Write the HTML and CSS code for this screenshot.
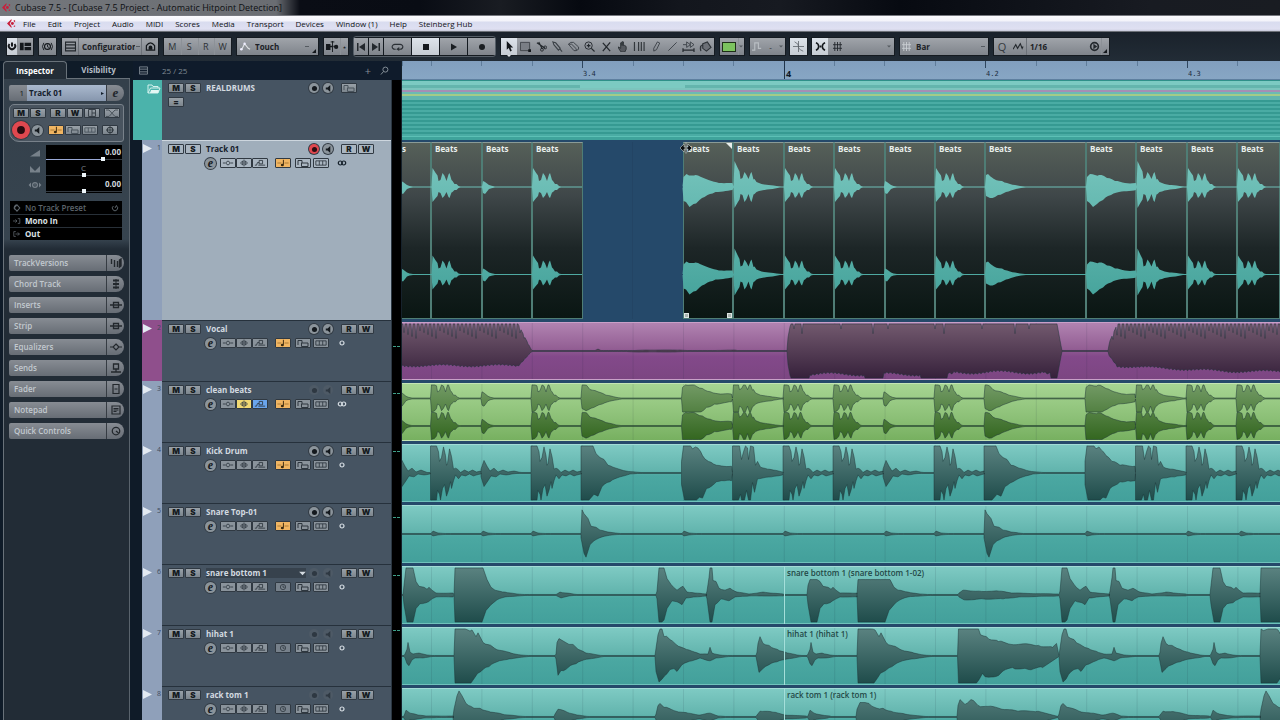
FILE: index.html
```html
<!DOCTYPE html>
<html lang="en">
<head>
<meta charset="utf-8">
<title>Cubase 7.5 - [Cubase 7.5 Project - Automatic Hitpoint Detection]</title>
<link rel="stylesheet" href="styles.css">
</head>
<body>
<svg class="sprite" aria-hidden="true">
  <symbol id="logo" viewBox="0 0 10 10"><path d="M5 0 0 5l5 5V8L3 5l2-3z" fill="#c8203c"/><circle cx="6" cy="5" r="1.6" fill="#c8203c"/><path d="M7 2l2-1v3zM7 8l2 1V7z" fill="#c8203c"/></symbol>
  <symbol id="power" viewBox="0 0 10 10"><path d="M5 1v4M2.5 2.5a3.2 3.2 0 1 0 5 0" fill="none" stroke="#16191d" stroke-width="2"/></symbol>
  <symbol id="layout" viewBox="0 0 14 10"><path d="M1 1h4v8H1zM6 1h7v3.500H6zM6 5.500h7V9H6z" fill="#14181c"/></symbol>
  <symbol id="clock" viewBox="0 0 14 12"><circle cx="7" cy="6" r="3.200" fill="none" stroke="#14181c" stroke-width="1.300"/><path d="M7 4v2.300l1.500.7M3 2Q0 6 3 10M11 2q3 4 0 8" fill="none" stroke="#14181c"/></symbol>
  <symbol id="list" viewBox="0 0 10 10"><path d="M.5 1h9v8h-9zM1 3.500h8M1 6.500h8" fill="none" stroke="currentColor"/></symbol>
  <symbol id="house" viewBox="0 0 12 10"><path d="M1.500 9V4Q6-2 10.500 4v5zM1 9h10" fill="none" stroke="#14181c" stroke-width="1.300"/><path d="M4 8.500V6a2 2 0 0 1 4 0v2.500z" fill="#14181c"/></symbol>
  <symbol id="auto" viewBox="0 0 12 10"><path d="M0 8h2l3-6 4 5 2 1" fill="none" stroke="#dfe3e6" stroke-width="1.200"/><circle cx="5" cy="2" r="1.300" fill="#eef"/><circle cx="1.500" cy="8" r="1.300" fill="#eef"/></symbol>
  <symbol id="scroll" viewBox="0 0 14 12"><path d="M0 4h4v5H0zM4 6h3M8 6h4" stroke="#15191d" fill="#15191d" stroke-width="1.500"/><path d="M7 0v12M5 1h4" stroke="#15191d"/><circle cx="11" cy="6.500" r="2.300" fill="#15191d"/></symbol>
  <symbol id="prev" viewBox="0 0 10 8"><path d="M1 0h1.500v8H1zM9 0v8L3 4z" fill="#23282d"/></symbol>
  <symbol id="next" viewBox="0 0 10 8"><path d="M7.500 0H9v8H7.500zM1 0v8l6-4z" fill="#23282d"/></symbol>
  <symbol id="cycle" viewBox="0 0 14 9"><path d="M5 7H4a3 2.700 0 0 1 0-5.400h6A3 2.700 0 0 1 10 7H8" fill="none" stroke="#2b3035" stroke-width="1.300"/><path d="M9 4.500V9L5.500 7z" fill="#2b3035"/></symbol>
  <symbol id="stop" viewBox="0 0 8 8"><path d="M1 1h6v6H1z" fill="#15191d"/></symbol>
  <symbol id="play" viewBox="0 0 8 8"><path d="M1 .5v7L7 4z" fill="#1a1e22"/></symbol>
  <symbol id="rec" viewBox="0 0 8 8"><circle cx="4" cy="4" r="3" fill="#1a1e22"/></symbol>
  <symbol id="arrow" viewBox="0 0 12 12"><path d="M3 0v9.500l2.200-2 1.600 4 1.700-.8L7 7.200h3z" fill="#14181c"/></symbol>
  <symbol id="range" viewBox="0 0 12 12"><path d="M.5 1.500h10v9H.5z" fill="#7a7e85" stroke="#3e4348"/><path d="M9 9h3v3H9z" fill="#14181c"/></symbol>
  <symbol id="scissors" viewBox="0 0 12 12"><path d="M1 2l9 6M3 1l4 8" stroke="#24292e" stroke-width="1.300"/><circle cx="6.500" cy="9.500" r="1.600" fill="none" stroke="#24292e"/><circle cx="10" cy="7" r="1.600" fill="none" stroke="#24292e"/></symbol>
  <symbol id="glue" viewBox="0 0 12 12"><path d="M1 1l3 1 5 6-2 2-5-6zM8.500 8.500l2.500 3" fill="none" stroke="#3b4147" stroke-width="1.200"/></symbol>
  <symbol id="eraser" viewBox="0 0 12 12"><path d="M.5 3.500L3 1.500h3l5.500 5v2.500l-2.500 1.500H6.500zM.5 3.500h3.500l5 5v2" fill="none" stroke="#3b4147"/></symbol>
  <symbol id="zoom" viewBox="0 0 12 12"><circle cx="5" cy="5" r="4" fill="none" stroke="#24292e"/><path d="M8 8l3.500 3.500M3 5h4M5 3v4" stroke="#24292e" stroke-width="1.300"/></symbol>
  <symbol id="mute" viewBox="0 0 12 12"><path d="M2 2l8 9M10 1.500L2 11" stroke="#24292e" stroke-width="1.400"/></symbol>
  <symbol id="hand" viewBox="0 0 12 12"><path d="M1.500 6.500L4 8V2q1-1 1.500 0v3-4q1-.7 1.500 0v4q.7-.8 1.500 0 1 0 1.500 1.500V9l-1.500 3h-4L2 8.500z" fill="#55595f" stroke="#2c3136"/></symbol>
  <symbol id="warp" viewBox="0 0 14 12"><path d="M1.500 1v10M6 1v10M9 1v10M12 1v10" stroke="#33383d" stroke-width="1.300"/></symbol>
  <symbol id="pencil" viewBox="0 0 12 12"><path d="M3 8l4-7 2.500 1.200L6 9.500 3 11z" fill="none" stroke="#3b4147"/></symbol>
  <symbol id="line" viewBox="0 0 12 12"><path d="M1.500 10.500l9-9" stroke="#3b4147"/></symbol>
  <symbol id="scrub" viewBox="0 0 14 12"><path d="M1 4h4V1l4 3-4 3V4M9 4V1l4 3-4 3z" fill="none" stroke="#3b4147"/><path d="M1 10h12M1 8v4M13 8v4" stroke="#24292e" stroke-width="1.300"/></symbol>
  <symbol id="bucket" viewBox="0 0 14 12"><path d="M4 3l5-2 4 6-5 4-4-3zM4 4Q0 5 2 11" fill="#6c7077" stroke="#2c3136" stroke-width="1.200"/></symbol>
  <symbol id="curve" viewBox="0 0 12 12"><path d="M0 10h3V2h4v6h3" fill="none" stroke="#b8bdc2" stroke-width="1.300"/></symbol>
  <symbol id="cross" viewBox="0 0 14 14"><path d="M7 0v14M0 7h14M2 1q6 3 5 6t6 6" fill="none" stroke="#5b6167"/></symbol>
  <symbol id="snap" viewBox="0 0 12 10"><path d="M1 1q3 1 3 4T1 9M11 1Q8 2 8 5t3 4M6 4v2" fill="none" stroke="#14181c" stroke-width="1.700"/></symbol>
  <symbol id="hash" viewBox="0 0 10 10"><path d="M2 0v10M5 0v10M8 0v10M0 3h10M0 7h10" stroke="currentColor"/></symbol>
  <symbol id="wave" viewBox="0 0 12 8"><path d="M0 7l3-5 2 4 3-5 2 5 1-2" fill="none" stroke="#24292e" stroke-width="1.200"/></symbol>
  <symbol id="iterq" viewBox="0 0 10 10"><circle cx="5" cy="5" r="3.500" fill="none" stroke="#24292e" stroke-width="1.500"/><path d="M4 2.500v5L7.500 5z" fill="#24292e"/></symbol>
  <symbol id="search" viewBox="0 0 10 10"><circle cx="6" cy="4" r="2.800" fill="none" stroke="#848e97" stroke-width="1.100"/><path d="M4 6L1 9.500" stroke="#848e97" stroke-width="1.100"/></symbol>
  <symbol id="folder" viewBox="0 0 14 10"><path d="M1 9V1h4l1 1.500h5V4M1 9l2.500-5H13l-2 5z" fill="none" stroke="#d5f2ee"/><path d="M3 9l1-3h8l-1 3z" fill="#e4f7f4"/></symbol>
  <symbol id="tri" viewBox="0 0 8 8"><path d="M0 0v8l8-4z" fill="currentColor"/></symbol>
  <symbol id="down" viewBox="0 0 8 6"><path d="M0 1h8L4 5z" fill="currentColor"/></symbol>
  <symbol id="speaker" viewBox="0 0 10 10"><path d="M2 4h2l3-3v8L4 6H2z" fill="currentColor"/></symbol>
  <symbol id="dot" viewBox="0 0 10 10"><circle cx="5" cy="5" r="2.800" fill="currentColor"/></symbol>
  <symbol id="ins" viewBox="0 0 14 8"><path d="M1 4h3M10 4h3M4.500 4L6 2h2l1.500 2L8 6H6z" fill="none" stroke="currentColor"/></symbol>
  <symbol id="eq" viewBox="0 0 14 8"><path d="M7 0v8M3 4l2.500-2.500v5zM11 4L8.500 1.500v5z" fill="none" stroke="currentColor"/></symbol>
  <symbol id="send" viewBox="0 0 14 8"><path d="M1 6.500h2l1-3h2M5 6.500h8M6 1h4v4H6z" fill="none" stroke="currentColor"/></symbol>
  <symbol id="note" viewBox="0 0 14 10"><path d="M0 5h5M9 5h5" stroke="#9b6c2c"/><path d="M7.500 1v6" stroke="#3a2a10" stroke-width="1.200"/><ellipse cx="6.200" cy="7.500" rx="1.900" ry="1.500" fill="#3a2a10"/></symbol>
  <symbol id="lock" viewBox="0 0 12 8"><path d="M1 6V1.500h4V4M4.500 4h6.500v3.500H4.500z" fill="none" stroke="currentColor"/></symbol>
  <symbol id="lanes" viewBox="0 0 14 8"><path d="M1 1.500h12v5H1zM5 1.500v5M9 1.500v5" fill="none" stroke="currentColor"/></symbol>
  <symbol id="timer" viewBox="0 0 14 10"><circle cx="7" cy="5" r="3.300" fill="none" stroke="currentColor"/><path d="M7 3v2.300h2" fill="none" stroke="currentColor"/></symbol>
  <symbol id="mono" viewBox="0 0 10 8"><circle cx="5" cy="4" r="2" fill="none" stroke="currentColor" stroke-width="1.200"/></symbol>
  <symbol id="stereo" viewBox="0 0 10 8"><circle cx="3.300" cy="4" r="2" fill="none" stroke="currentColor" stroke-width="1.200"/><circle cx="6.700" cy="4" r="2" fill="none" stroke="currentColor" stroke-width="1.200"/></symbol>
  <symbol id="panes" viewBox="0 0 12 8"><path d="M2.500.5h7v7h-7zM6 .5v7M6 4h3.500" fill="none" stroke="#3a424a"/></symbol>
  <symbol id="xfade" viewBox="0 0 12 8"><path d="M0 7.500h3L9 1h3M0 1h3l6 6.500h3" fill="none" stroke="#4a535b"/></symbol>
  <symbol id="freeze" viewBox="0 0 12 10"><circle cx="6" cy="5" r="3.500" fill="none" stroke="#2f373e" stroke-width="1.300"/><path d="M6 0v10M1 5h10" stroke="#2f373e"/></symbol>
  <symbol id="vol" viewBox="0 0 12 8"><path d="M1 7.500L11 1v6.500z" fill="#77818a"/></symbol>
  <symbol id="pan" viewBox="0 0 12 8"><path d="M1 1v6.500h10V1L6 6z" fill="#77818a"/></symbol>
  <symbol id="delay" viewBox="0 0 16 10"><path d="M3 2L0 5l3 3zM13 2l3 3-3 3z" fill="#77818a"/><circle cx="8" cy="5" r="3" fill="none" stroke="#77818a" stroke-width="1.500"/><path d="M8 3v3" stroke="#77818a"/></symbol>
  <symbol id="in" viewBox="0 0 10 8"><path d="M0 4h5M3 2l2 2-2 2M6 1h2.500v6H6" fill="none" stroke="#5d656c"/></symbol>
  <symbol id="out" viewBox="0 0 10 8"><path d="M3.500 1H1v6h2.500M3 4h5M6 2l2 2-2 2" fill="none" stroke="#5d656c"/></symbol>
  <symbol id="preset" viewBox="0 0 10 10"><path d="M5 1l3.500 4L5 9 1.500 5zM5 1a4 4 0 0 0-3 6" fill="none" stroke="#5d656c" stroke-width="1.300"/></symbol>
  <symbol id="reload" viewBox="0 0 10 10"><path d="M3 2.500a3.300 3.300 0 1 0 4 0M5 5l2-3.500" fill="none" stroke="#5d656c" stroke-width="1.200"/></symbol>
  <symbol id="versions" viewBox="0 0 12 10"><path d="M1.500 1v5M4.500 2v7M7.500 3v6M9.500 2l1.500-1v7l-1.500 1z" fill="#23282d" stroke="#23282d" stroke-width="1.400"/></symbol>
  <symbol id="chord" viewBox="0 0 12 10"><path d="M6 0v10" stroke="#23282d"/><path d="M3 1.500h6M3 5h6M3 8.500h6" stroke="#23282d" stroke-width="2"/></symbol>
  <symbol id="insert" viewBox="0 0 12 10"><path d="M0 5h12M3.500 2.500h5v5h-5z" fill="none" stroke="#23282d" stroke-width="1.300"/></symbol>
  <symbol id="equal" viewBox="0 0 12 10"><path d="M0 5h3M9 5h3M6 2l3 3-3 3-3-3z" fill="none" stroke="#23282d" stroke-width="1.200"/></symbol>
  <symbol id="sends" viewBox="0 0 12 10"><path d="M3.500 1h5v5h-5zM6 6v3M1 9h10" fill="none" stroke="#23282d" stroke-width="1.300"/></symbol>
  <symbol id="fader" viewBox="0 0 12 10"><path d="M3 .5h6v9H3zM4.500 5h3" fill="none" stroke="#23282d" stroke-width="1.200"/></symbol>
  <symbol id="pad" viewBox="0 0 12 10"><path d="M2 1h8v8H2zM3.500 3.500h5M3.500 5h5M3.500 6.500h3" fill="none" stroke="#23282d" stroke-width="1.200"/></symbol>
  <symbol id="knob" viewBox="0 0 12 12"><circle cx="6" cy="6" r="4.500" fill="none" stroke="#23282d" stroke-width="1.500"/><path d="M6 6l3 2.500" stroke="#23282d" stroke-width="1.500"/></symbol>
</svg>

<header class="titlebar"><svg class="logo"><use href="#logo"/></svg><h1 class="title">Cubase 7.5 - [Cubase 7.5 Project - Automatic Hitpoint Detection]</h1></header>

<nav class="menubar">
  <svg class="logo"><use href="#logo"/></svg>
  <a href="#">File</a><a href="#">Edit</a><a href="#">Project</a><a href="#">Audio</a><a href="#">MIDI</a><a href="#">Scores</a><a href="#">Media</a><a href="#">Transport</a><a href="#">Devices</a><a href="#">Window (1)</a><a href="#">Help</a><a href="#">Steinberg Hub</a>
</nav>

<div class="toolbar" role="toolbar" aria-label="Project">
  <div class="group">
    <button class="tb w10 lit" aria-label="Activate project"><svg><use href="#power"/></svg></button>
    <button class="tb w16" aria-label="Window layout"><svg class="wide"><use href="#layout"/></svg></button>
  </div>
  <div class="group"><button class="tb w17" aria-label="Constrain delay"><svg class="wide"><use href="#clock"/></svg></button></div>
  <div class="group">
    <button class="tb w16" aria-label="Visibility list"><svg><use href="#list"/></svg></button>
    <select class="pick pick-config" aria-label="Visibility configuration"><option>Configurations</option></select>
    <button class="tb w16" aria-label="Agents"><svg><use href="#house"/></svg></button>
  </div>
  <div class="group letters">
    <button class="tb">M</button><button class="tb">S</button><button class="tb">R</button><button class="tb">W</button>
  </div>
  <div class="group corner">
    <span class="tb w16"><svg><use href="#auto"/></svg></span>
    <select class="pick pick-touch" aria-label="Automation mode"><option>Touch</option></select>
    <span class="tb w6"></span>
  </div>
  <div class="group"><button class="tb w16" aria-label="Auto-scroll"><svg class="wide"><use href="#scroll"/></svg></button><button class="tb w8" aria-label="Suspend scroll">⋆</button></div>
  <div class="transport">
    <button class="tb w14" aria-label="Previous marker"><svg><use href="#prev"/></svg></button>
    <button class="tb w14" aria-label="Next marker"><svg><use href="#next"/></svg></button>
    <button class="tb w27" aria-label="Cycle"><svg class="wide"><use href="#cycle"/></svg></button>
    <button class="tb w27 lit" aria-label="Stop"><svg><use href="#stop"/></svg></button>
    <button class="tb w27" aria-label="Play"><svg><use href="#play"/></svg></button>
    <button class="tb w27" aria-label="Record"><svg><use href="#rec"/></svg></button>
  </div>
  <div class="group tools">
    <button class="tb w16 lit current" aria-label="Select"><svg><use href="#arrow"/></svg></button>
    <button class="tb w16" aria-label="Range"><svg><use href="#range"/></svg></button>
    <button class="tb w16" aria-label="Split"><svg><use href="#scissors"/></svg></button>
    <button class="tb w16" aria-label="Glue"><svg><use href="#glue"/></svg></button>
    <button class="tb w16" aria-label="Erase"><svg class="wide"><use href="#eraser"/></svg></button>
    <button class="tb w17" aria-label="Zoom"><svg><use href="#zoom"/></svg></button>
    <button class="tb w16" aria-label="Mute"><svg><use href="#mute"/></svg></button>
    <button class="tb w16" aria-label="Comp"><svg><use href="#hand"/></svg></button>
    <button class="tb w18" aria-label="Time warp"><svg class="wide"><use href="#warp"/></svg></button>
    <button class="tb w16" aria-label="Draw"><svg><use href="#pencil"/></svg></button>
    <button class="tb w16" aria-label="Line"><svg><use href="#line"/></svg></button>
    <button class="tb w16" aria-label="Play tool"><svg class="wide"><use href="#scrub"/></svg></button>
    <button class="tb w18" aria-label="Color tool"><svg class="wide"><use href="#bucket"/></svg></button>
  </div>
  <div class="group"><button class="tb w18" aria-label="Event color"><span class="swatch"></span></button><span class="tb w6"><svg class="caret"><use href="#down"/></svg></span></div>
  <div class="group"><button class="tb w14" aria-label="Nudge"><svg><use href="#curve"/></svg></button><span class="tb w13 flat">-</span><span class="tb w8 flat"><svg class="caret"><use href="#down"/></svg></span></div>
  <div class="group near"><button class="tb w17 lit" aria-label="Snap to zero crossing"><svg class="wide"><use href="#cross"/></svg></button></div>
  <div class="group">
    <button class="tb w16 lit" aria-label="Snap"><svg><use href="#snap"/></svg></button>
    <button class="tb w18 flat" aria-label="Grid type"><svg class="small"><use href="#hash"/></svg></button>
    <span class="tb dim flat"></span>
    <span class="tb w10 flat"><svg class="caret"><use href="#down"/></svg></span>
  </div>
  <div class="group">
    <span class="tb w13 pale"><svg class="small"><use href="#hash"/></svg></span>
    <select class="pick pick-bar" aria-label="Grid"><option>Bar</option></select>
  </div>
  <div class="group corner">
    <button class="tb w16 big">Q</button>
    <button class="tb w16 flat" aria-label="Soft quantize"><svg><use href="#wave"/></svg></button>
    <select class="pick pick-q" aria-label="Quantize"><option>1/16</option></select>
    <button class="tb w13 flat" aria-label="Iterative quantize"><svg><use href="#iterq"/></svg></button>
    <span class="tb w8"></span>
  </div>
</div>

<main class="workspace">
  <aside class="inspector">
    <div class="tabs" role="tablist">
      <button class="tab active" role="tab" aria-selected="true">Inspector</button>
      <button class="tab" role="tab" aria-selected="false">Visibility</button>
    </div>
    <div class="inspector-body">
      <div class="pill pill-track"><span class="pill-num">1</span><button class="pill-name">Track 01<svg><use href="#tri"/></svg></button><button class="pill-end script-e">e</button></div>
      <div class="channel">
        <button class="sq">M</button><button class="sq">S</button><button class="sq gap">R</button><button class="sq">W</button><button class="sq" aria-label="Lanes"><svg><use href="#panes"/></svg></button><button class="sq gap" aria-label="Auto fades"><svg><use href="#xfade"/></svg></button>
        <div class="channel-two">
          <button class="round armed large" aria-label="Record enable"><svg><use href="#dot"/></svg></button>
          <button class="round medium" aria-label="Monitor"><svg><use href="#speaker"/></svg></button>
          <button class="sq on-orange" aria-label="Musical mode"><svg><use href="#note"/></svg></button><button class="sq faint" aria-label="Lock"><svg><use href="#lock"/></svg></button><button class="sq faint" aria-label="Show lanes"><svg><use href="#lanes"/></svg></button><button class="sq gap" aria-label="Freeze"><svg><use href="#freeze"/></svg></button>
        </div>
      </div>
      <div class="faders">
        <label class="fader-icon" for="vol-r"><svg><use href="#vol"/></svg></label><div class="fader"><output>0.00</output><input class="filled" id="vol-r" type="range" min="0" max="100" value="77"></div>
        <label class="fader-icon" for="pan-r"><svg><use href="#pan"/></svg></label><div class="fader center"><output>C</output><input id="pan-r" type="range" min="0" max="100" value="50"></div>
        <label class="fader-icon" for="del-r"><svg><use href="#delay"/></svg></label><div class="fader"><output>0.00</output><input id="del-r" type="range" min="0" max="100" value="50"></div>
      </div>
      <div class="routing">
        <button class="route muted"><svg><use href="#preset"/></svg><span>No Track Preset</span><svg><use href="#reload"/></svg></button>
        <button class="route"><svg><use href="#in"/></svg><span>Mono In</span></button>
        <button class="route"><svg><use href="#out"/></svg><span>Out</span></button>
      </div>
      <div class="sections">
        <button class="pill"><span class="pill-label">TrackVersions</span><span class="pill-end"><svg><use href="#versions"/></svg></span></button>
        <button class="pill"><span class="pill-label">Chord Track</span><span class="pill-end"><svg><use href="#chord"/></svg></span></button>
        <button class="pill"><span class="pill-label">Inserts</span><span class="pill-end"><svg><use href="#insert"/></svg></span></button>
        <button class="pill"><span class="pill-label">Strip</span><span class="pill-end"><svg><use href="#insert"/></svg></span></button>
        <button class="pill"><span class="pill-label">Equalizers</span><span class="pill-end"><svg><use href="#equal"/></svg></span></button>
        <button class="pill"><span class="pill-label">Sends</span><span class="pill-end"><svg><use href="#sends"/></svg></span></button>
        <button class="pill"><span class="pill-label">Fader</span><span class="pill-end"><svg><use href="#fader"/></svg></span></button>
        <button class="pill"><span class="pill-label">Notepad</span><span class="pill-end"><svg><use href="#pad"/></svg></span></button>
        <button class="pill"><span class="pill-label">Quick Controls</span><span class="pill-end"><svg><use href="#knob"/></svg></span></button>
      </div>
    </div>
  </aside>

  <section class="project">
    <div class="project-head">
      <div class="list-head"><svg class="list-icon"><use href="#list"/></svg><span class="count">25 / 25</span><button class="plain add" aria-label="Add track">+</button><button class="plain" aria-label="Find track"><svg><use href="#search"/></svg></button></div>
      <div class="meter"></div>
      <div class="ruler" id="ruler"></div>
    </div>
    <div id="tracks"></div>
  </section>
</main>
<script src="app.js"></script>
</body>
</html>
```
FILE: styles.css
```css
* { box-sizing: border-box; }
body {
  margin: 0;
  height: 100vh;
  overflow: hidden;
  display: flex;
  flex-direction: column;
  background: #0f1b28;
  color: #d3dae0;
  font: 8px/10px "Open Sans", "Noto Sans", sans-serif;
}
button, select, input { font: inherit; color: inherit; margin: 0; padding: 0; border: 0; background: none; border-radius: 0; }
svg { display: block; }
.sprite { position: absolute; width: 0; height: 0; }

/* window chrome */
.titlebar { flex: none; height: 16px; display: flex; align-items: center; gap: 4px; padding-left: 2px; border-bottom: 1px solid #777980; background: linear-gradient(90deg, #74777c 0, #6a6d72 276px, #0a0d15 300px, #090c14 420px, #191c22 500px, #060910 580px, #13161d 680px, #171a21 780px, #070a11 900px, #181b22 1150px, #191c22); }
.title { margin: 0; font: inherit; font-size: 9px; color: #0d0f12; }
.logo { width: 9px; height: 9px; flex: none; }
.menubar { flex: none; height: 16px; display: flex; align-items: center; gap: 12px; padding-left: 7px; background: linear-gradient(#fbfbfe 0, #f3f3fa 5px, #d9dcef 6px, #dfe0f2 13px, #c6c9d8); border-bottom: 1px solid #6d7178; }
.menubar .logo { margin-right: -5px; }
.menubar a { color: #101216; text-decoration: none; white-space: nowrap; }

/* toolbar */
.toolbar { flex: none; height: 29px; display: flex; align-items: center; gap: 6px; padding: 0 7px; background: linear-gradient(#1a222b, #222c36); }
.group { display: flex; height: 17px; background: linear-gradient(#a0a4aa, #7f848b); box-shadow: 0 0 0 1px #151b21; }
.near { margin: 0 -1px; }
.tb { display: flex; align-items: center; justify-content: center; height: 17px; color: #22272c; }
.tb svg { width: 11px; height: 11px; }
.tb .wide { width: 13px; }
.tb .small { width: 9px; height: 9px; }
.tb .caret { width: 4px; height: 3px; color: #555b61; }
.tb + .tb { box-shadow: inset 1px 0 #8c9197; }
.tools .tb, .tb.flat { box-shadow: none; }
.w6 { width: 6px; } .w8 { width: 8px; } .w10 { width: 10px; } .w13 { width: 13px; } .w14 { width: 14px; } .w16 { width: 16px; } .w17 { width: 17px; } .w18 { width: 18px; } .w27 { width: 27px; }
.dim { width: 38px; }
.lit { background: linear-gradient(#dde3ea, #c6ccd3); }
.pale { color: #c9ced2; }
.letters { width: 67px; }
.letters .tb { flex: 1; font-size: 9px; color: #2c3136; }
.big { font-size: 11px; color: #33383d; }
.pick { appearance: none; height: 17px; padding: 0 10px 0 3px; font-weight: 700; color: #1c2126; border-left: 1px solid #6c7178; background: linear-gradient(#555b61, #555b61) right 3px center / 4px 1px no-repeat; }
.pick-config { width: 64px; border-right: 1px solid #6c7178; padding-right: 6px; background-position: right 1px center; }
.pick-touch { width: 59px; border-left: 0; padding-left: 2px; }
.pick-bar { width: 75px; border-left: 0; }
.pick-q { width: 62px; background-image: none; }
.corner { position: relative; }
.corner::after { content: ""; position: absolute; right: 2px; bottom: 2px; border: 2px solid; border-color: transparent #14181c #14181c transparent; }
.transport { display: flex; gap: 1px; align-items: center; height: 21px; padding: 1px 0; margin: 0 -1px; border: 1px solid #555e67; border-radius: 3px; background: #141a20; }
.transport .tb { background: linear-gradient(#a0a4aa, #7f848b); box-shadow: none; }
.transport .tb.lit { background: linear-gradient(#dde3ea, #c6ccd3); }
.transport svg { width: 10px; height: 8px; }
.current { position: relative; }
.current::after { content: ""; position: absolute; bottom: -4px; left: 6px; border: 2px solid transparent; border-top-color: #e2e6ea; }
.swatch { width: 14px; height: 10px; background: #7cc35f; border: 1px solid #1e2f17; }

/* workspace */
.workspace { flex: 1; min-height: 0; display: flex; gap: 3px; }
.inspector { flex: none; width: 130px; padding-left: 3px; display: flex; flex-direction: column; }
.tabs { flex: none; display: flex; height: 18px; background: #0f1b28; }
.tab { width: 63px; font-weight: 700; border-bottom: 1px solid #69727a; color: #b4bcc4; }
.tab.active { width: 64px; background: #232d37; color: #fff; border: 1px solid #69727a; border-bottom: 0; border-radius: 4px 4px 0 0; }
.inspector-body { flex: 1; padding: 6px 5px; display: flex; flex-direction: column; background: linear-gradient(#34404b, #37444f 160px, #222c36 170px); border: solid #59636c; border-width: 0 1px; border-left-color: #69727a; }
.pill { flex: none; display: flex; width: 115px; height: 16px; color: #c2c9cf; text-align: left; border-radius: 2px 8px 8px 2px; background: linear-gradient(#878c93, #676d75); overflow: hidden; }
.pill-label { flex: 1; padding: 3px 5px; font-weight: 600; }
.pill-end { width: 18px; height: 16px; display: flex; align-items: center; justify-content: center; border-left: 1px solid #363c43; }
.pill-end svg { width: 12px; height: 10px; }
.pill-num { width: 18px; padding: 3px 3px 0 0; text-align: right; color: #14181c; }
.pill-name { flex: 1; display: flex; align-items: center; justify-content: space-between; padding: 0 2px; text-align: left; font-weight: 700; color: #14202c; background: linear-gradient(#aab9ce, #8696ad); }
.pill-name svg { width: 3px; height: 5px; }
.script-e { font: italic bold 13px/14px "Liberation Serif", serif; color: #22272c; }
.channel { margin-top: 3px; width: 115px; height: 38px; padding: 3px 0 0 3px; display: flex; flex-wrap: wrap; align-content: flex-start; gap: 1px; border: 1px solid #78818a; border-radius: 5px 3px 3px 10px; background: #49545f; }
.channel-two { display: flex; gap: 1px; align-items: center; width: 100%; margin-top: 2px; }
.sq { flex: none; width: 16px; height: 10px; display: flex; align-items: center; justify-content: center; font: 900 8px/8px Inter, sans-serif; color: #151b21; background: linear-gradient(#99a1a8, #7c858d); border: 1px solid #303942; border-radius: 1px; }
.sq svg { width: 12px; height: 8px; }
.sq.faint { color: #4a545d; }
.channel .gap { margin-left: 3px; }
.on-orange { background: #f0b562; }
.on-yellow { background: #f1d973; }
.on-blue { background: #6aa5ec; }
.round { flex: none; width: 11px; height: 11px; display: flex; align-items: center; justify-content: center; border-radius: 50%; background: #8b949b; color: #14191e; box-shadow: 0 0 0 1px #333c45; }
.round svg { width: 9px; height: 9px; }
.medium { margin: 0 4px 0 1px; }
.large { width: 18px; height: 18px; margin-left: -1px; }
.armed { background: #e0484f; color: #2b0c10; }
.large svg { width: 14px; height: 14px; }
.faders { margin-top: 3px; display: grid; grid-template-columns: 37px 76px; }
.fader-icon { display: flex; align-items: center; justify-content: center; padding-left: 14px; }
.fader-icon svg { width: 14px; height: 8px; }
.fader { height: 16px; background: #000; text-align: right; display: flex; flex-direction: column; }
.fader output { height: 12px; line-height: 14px; padding-right: 1px; font-weight: 700; color: #cfd5da; }
.fader.center output { text-align: center; color: #7c8389; font-weight: 400; }
.fader input { appearance: none; width: 100%; height: 4px; background: linear-gradient(#333a41, #333a41) center / 100% 1px no-repeat; }
.fader .filled { background: linear-gradient(90deg, #9aa9d6 77%, #333a41 77%) center / 100% 1px no-repeat; }
.fader input::-webkit-slider-thumb { appearance: none; width: 4px; height: 4px; background: #eef6fa; }
.routing { margin: 8px 0 15px 1px; width: 112px; background: #000; }
.route { width: 100%; height: 13px; display: flex; align-items: center; gap: 4px; padding: 0 3px; text-align: left; font-weight: 700; color: #dde2e6; }
.route + .route { border-top: 1px solid #283038; }
.route span { flex: 1; }
.route svg { width: 8px; height: 8px; }
.route.muted { color: #5d656c; font-weight: 600; }
.sections { display: flex; flex-direction: column; gap: 5px; }

/* project header */
.project { flex: 1; min-width: 0; }
.project-head { display: flex; height: 19px; }
.list-head { flex: none; width: 259px; display: flex; align-items: center; padding-left: 6px; background: #0f1b2b; color: #7f8993; }
.list-icon { width: 9px; height: 9px; margin-right: 14px; }
.count { flex: 1; }
.plain { width: 16px; display: flex; justify-content: center; color: #848e97; }
.plain svg { width: 9px; height: 9px; }
.add { font-size: 11px; }
.meter { flex: none; width: 10px; background: #000; border-right: 1px solid #16222c; }
.project-head .meter { background: #0f1b2b; }
.level { display: flex; gap: 1px; margin-left: 1px; }
.level i { width: 3px; height: 1px; background: #3fa08a; }
.ruler { flex: 1; display: flex; background: linear-gradient(#829fbe, #87a6c4); border-bottom: 1px solid #5e7f9f; }
.tick { flex: none; padding: 9px 0 0 1px; color: #1c2d40; white-space: pre; background: linear-gradient(#5f7c9a, #5f7c9a) 0 0 / 1px 5px no-repeat; font: 7px/9px "DejaVu Sans Mono", monospace; }
.tick.beat { background: linear-gradient(#2f465e, #2f465e) 0 0 / 1px 7px no-repeat; }
.tick.bar { padding: 8px 0 0 2px; font: 700 9px/9px "Open Sans", sans-serif; color: #0d1826; background: linear-gradient(#20344a, #20344a) 0 0 / 1px 100% no-repeat; }

/* track rows */
.track { display: flex; height: 61px; }
.track.folder { height: 60px; }
.track.tall { height: 180px; }
.head { flex: none; width: 259px; display: flex; padding-left: 9px; border-right: 1px solid #2b3742; }
.folder .head { padding-left: 0; }
.strip { flex: none; width: 20px; padding: 4px 1px; display: flex; justify-content: space-between; background: #8fa0ba; color: #3c495a; font-size: 7px; line-height: 8px; }
.strip svg { width: 9px; height: 9px; color: #e3eaf2; }
.folder .strip { width: 29px; justify-content: flex-end; background: #4bb3ab; }
.folder .strip svg { width: 14px; height: 10px; }
.purple .strip { background: #8f4f8c; }
.panel { flex: 1; min-width: 0; padding: 3px 6px 0 6px; background: #465462; border-top: 1px solid #26313c; display: flex; flex-direction: column; gap: 4px; }
.folder .panel { border-top: 0; }
.selected .panel { background: #a0aebb; border-top-color: #cdd6de; }
.line { display: flex; align-items: center; gap: 1px; height: 10px; }
.name { display: flex; justify-content: space-between; align-items: center; width: 100px; margin: 0 2px 0 4px; font-weight: 700; white-space: nowrap; }
.name svg { width: 7px; height: 5px; }
.name.hover { background: #37424d; }
.name + .round { margin-right: 3px; }
.line .round { width: 10px; height: 10px; }
.line .off { background: #4e5a66; color: #2e3842; box-shadow: none; }
.automation { display: flex; gap: 1px; margin-left: 7px; }
.second { padding-left: 37px; }
.line.second .round { width: 11px; height: 11px; font: italic bold 12px/9px "Liberation Serif", serif; margin-right: 3px; }
.second .sq { color: #2e373f; background: #8a939b; margin-right: -1px; }
.second .on-orange { background: #f0b562; margin: 0 3px 0 7px; }
.second .on-yellow { background: #f1d973; }
.second .on-blue { background: #6aa5ec; }
.second .grp { margin: 0 3px 0 7px; background: #77818b; }
.second .sq:nth-last-child(3) { margin-right: 1px; }
.ring { width: 10px; height: 8px; margin-left: 8px; color: #d5dce2; }
.selected .name, .selected .ring { color: #15202a; }
.selected .sq { background: #aab6c1; }
.selected .on-orange { background: #f0b562; }

/* arrange lanes */
.lane { flex: 1; min-width: 0; display: grid; grid-template: 100% / 100%; padding: 2px 0 1px; background: #25496a; position: relative; }
.lane > * { grid-area: 1 / 1; min-width: 0; }
.waves { width: 100%; height: 100%; overflow: hidden; background: linear-gradient(#7ecac3, #63b5ae 45%, #4ba8a2 55%, #43a09b); border-top: 1px solid #a2dcd6; border-bottom: 1px solid #6fc2bb; }
.purple .waves { background: linear-gradient(#b183b1, #935f94 45%, #83498a 60%, #7c4682); border-color: #c9a0c8 #a06ba2; }
.green .waves { background: linear-gradient(#a6d592, #8cc077 60%, #77b060); border-color: #c4e5b5 #a9d795; }
.tall .waves { background: none; border: 0; pointer-events: none; z-index: 1; }
.folder .lane {
  display: block;
  padding: 0;
  background:
    linear-gradient(#7ccac2, #7ccac2) 23% 4px / 12% 4px no-repeat,
    linear-gradient(#2f9089 0 1px, #7ccac2 1px 5px, #64b5ad 5px 8px, #7cc4bd 8px 10px, #a58fb4 10px 12px, #6cbab3 12px 14px, #a3cb88 14px 16px, #62b5ae 16px 20px, transparent 20px 56px, #5cc0b5 56px 57px, #3fa39b 57px),
    repeating-linear-gradient(#369a92 0 2px, #4aaca4 2px 4px);
}
.events { display: flex; }
.event { flex: none; overflow: hidden; padding: 1px 0 0 3px; font-weight: 700; color: #e9efec; background: linear-gradient(#566059, #3f4749 30%, #1d2627 60%, #0a1613); border: 1px solid #4f7d75; border-top-color: #8a9b97; position: relative; }
.gapspace { flex: none; }
.clip { flex: none; overflow: hidden; padding: 2px 2px; font-weight: 600; white-space: nowrap; color: #234846; }
.clip + .clip { border-left: 1px solid #a4dfda; }
.event.cut { padding-left: 0; border-left: 0; }
.picked::before { content: ""; position: absolute; right: 0; top: 0; border: 3px solid; border-color: #e9efec #e9efec transparent transparent; }
.picked i { position: absolute; bottom: 0; width: 5px; height: 5px; background: #a9b3af; border: 1px solid #dfe6e3; }
.picked i:first-of-type { left: 0; }
.picked i:last-of-type { right: 0; }
.pointer { position: absolute; top: 0; width: 12px; height: 12px; margin-left: -3px; z-index: 2; }
```
FILE: app.js
```js
// Timeline range shown in the arrange window, in timeline units.
const T0 = 402, T1 = 1280, SPAN = T1 - T0;
const pct = v => (v / SPAN * 100) + '%';
const use = (id, cls) => `<svg${cls ? ` class="${cls}"` : ''}><use href="#${id}"/></svg>`;

// Envelopes: lists of [offset, amplitude] above (u) and below (d) the centre line.
const bumps = (pk, tr, k) => [[0, pk], [3, pk * .75], [5, pk * .6], [6, tr], [8, tr + 1], [10, k], [12, k * .8], [14, tr], [16, k * .9], [17, k], [19, k * .5], [20, tr], [22, 3], [24, 3], [26, 1], [28, 0]];
const S = {
  A: { u: bumps(19, 6, 14), d: bumps(15, 5, 11) },
  B: { u: [...bumps(26, 8, 15).slice(0, 12), [22, 5], [27, 3], [34, 2], [42, 1], [49, 0]], d: [...bumps(21, 7, 15).slice(0, 12), [22, 5], [30, 3], [38, 2], [49, 0]] },
  C: { u: [[0, 6], [2, 5], [6, 2], [12, 0]], d: [[0, 6], [2, 7], [6, 2], [12, 0]] },
  D: { u: [[0, 10], [3, 13], [12, 12], [20, 9], [28, 6], [38, 4], [49, 4]], d: [[0, 14], [6, 20], [10, 17], [16, 13], [24, 8], [32, 5], [49, 3]] },
  E: { u: [[0, 12], [2, 13], [8, 8], [16, 6], [24, 3], [34, 1], [42, 0]], d: [[0, 9], [4, 11], [12, 8], [20, 5], [30, 2], [42, 0]] },
  KA: { u: [[-1, 28], [5, 28], [7, 22], [8, 12], [10, 16], [12, 27], [14, 18], [15, 8], [16, 10], [18, 25], [20, 17], [22, 4], [24, 5], [26, 4], [29, 0], [33, 3], [37, 1], [41, 3], [45, 1], [49, 2]], d: [[-1, 28], [5, 28], [6, 18], [8, 22], [9, 28], [11, 16], [13, 12], [15, 24], [17, 18], [19, 9], [20, 16], [22, 8], [24, 2], [27, 6], [30, 2], [34, 3], [38, 1], [42, 3], [49, 1]] },
  KB: { u: [[-1, 28], [6, 28], [8, 14], [10, 22], [12, 28], [14, 26], [15, 14], [17, 28], [20, 27], [22, 8], [24, 12], [27, 6], [34, 4], [40, 3], [49, 1]], d: [[-1, 28], [5, 28], [7, 22], [8, 28], [11, 28], [13, 18], [15, 28], [17, 28], [19, 10], [21, 20], [24, 6], [30, 5], [38, 4], [49, 2]] },
  KC: { u: [[-1, 4], [2, 13], [5, 7], [8, 2], [12, 5], [16, 1], [21, 3], [26, 1], [32, 2], [40, 0]], d: [[-1, 4], [2, 14], [6, 8], [9, 3], [14, 4], [18, 1], [24, 2], [30, 1], [40, 0]] },
  KD: { u: [[-1, 12], [1, 28], [8, 28], [10, 25], [13, 27], [20, 18], [26, 12], [34, 8], [49, 7]], d: [[-1, 12], [2, 28], [14, 28], [17, 25], [20, 26], [24, 16], [34, 9], [42, 8], [49, 8]] },
  KE: { u: [[-1, 28], [11, 28], [14, 20], [18, 16], [22, 14], [26, 8], [34, 5], [44, 2], [62, 0]], d: [[-1, 28], [7, 28], [12, 22], [16, 24], [20, 14], [28, 9], [38, 4], [48, 1], [62, 0]] },
  T: { u: [[-1, 0], [0, 25], [2, 21], [6, 16], [9, 8], [14, 7], [18, 4], [26, 2], [42, 0]], d: [[-1, 4], [2, 20], [4, 24], [8, 11], [12, 7], [20, 3], [30, 1], [42, 0]] },
  t: { u: [[-1, 0], [1, 3], [6, 1], [20, 0]], d: [[-1, 0], [1, 2], [6, 1], [20, 0]] },
  n: { u: [[0, 1], [2, 7], [6, 4], [14, 2], [22, 1], [49, 1]], d: [[0, 1], [2, 5], [6, 3], [20, 1], [49, 0]] },
  F: { u: [[0, 10], [2, 28], [9, 28], [12, 14], [15, 9], [20, 8], [23, 6], [25, 8], [28, 5], [32, 2], [49, 2]], d: [[0, 10], [3, 28], [9, 28], [12, 14], [16, 9], [22, 8], [28, 4], [32, 2], [49, 2]] },
  G: { u: [[0, 28], [28, 28], [32, 16], [36, 8], [40, 5], [50, 3], [62, 1], [76, 0]], d: [[0, 28], [27, 28], [31, 16], [36, 10], [42, 5], [50, 2], [76, 0]] },
  H: { u: [[0, 4], [2, 28], [7, 28], [10, 17], [14, 11], [20, 5], [24, 8], [26, 9], [30, 3], [38, 2], [49, 1]], d: [[0, 4], [2, 28], [5, 28], [7, 26], [10, 14], [15, 6], [22, 8], [25, 10], [29, 3], [38, 2], [49, 1]] },
  I: { u: [[0, 4], [2, 18], [3, 28], [5, 28], [6, 15], [9, 14], [12, 7], [18, 5], [23, 7], [30, 3], [42, 1], [56, 3], [76, 1]], d: [[0, 4], [3, 28], [5, 28], [8, 10], [14, 4], [22, 6], [28, 2], [42, 1], [76, 1]] },
  s: { u: [[0, 1], [3, 3], [10, 2], [22, 0]], d: [[0, 1], [4, 3], [12, 1], [22, 0]] },
  q: { u: [[0, 0], [3, 2], [6, 0], [30, 0], [50, 1], [85, 1], [100, 0], [140, 1], [146, 0]], d: [[0, 0], [24, 0], [40, 1], [78, 1], [100, 0]] },
  J: { u: [[0, 2], [4, 5], [20, 4], [40, 4], [54, 2], [99, 1]], d: [[0, 2], [5, 5], [24, 4], [44, 4], [60, 2], [99, 1]] },
  K: { u: [[0, 2], [2, 7], [3, 14], [5, 4], [8, 2], [14, 3], [22, 1], [32, 0]], d: [[0, 2], [2, 8], [4, 10], [7, 4], [10, 2], [18, 2], [32, 0]] },
  L: { u: [[0, 28], [17, 27], [21, 20], [23, 24], [28, 14], [37, 10], [44, 6], [56, 3], [66, 1], [78, 0]], d: [[0, 28], [16, 28], [20, 22], [26, 16], [34, 11], [42, 6], [54, 3], [78, 0]] },
  M: { u: [[0, 2], [1, 14], [3, 18], [8, 15], [13, 12], [17, 12], [22, 7], [30, 3], [42, 1], [50, 0]], d: [[0, 3], [2, 20], [5, 15], [12, 12], [20, 8], [28, 4], [50, 0]] },
  N: { u: [[0, 8], [2, 22], [4, 28], [6, 28], [8, 20], [14, 17], [20, 12], [28, 8], [36, 5], [44, 2], [52, 2], [54, 9], [56, 3], [64, 1], [78, 0]], d: [[0, 16], [3, 27], [6, 24], [14, 14], [18, 13], [21, 16], [26, 9], [36, 5], [44, 2], [54, 5], [60, 2], [78, 0]] },
  O: { u: [[0, 4], [1, 13], [3, 20], [6, 13], [12, 11], [20, 7], [28, 4], [40, 1], [48, 0]], d: [[0, 6], [2, 17], [6, 13], [12, 9], [20, 6], [30, 3], [48, 0]] },
  P: { u: [[0, 28], [20, 28], [22, 22], [28, 20], [40, 15], [60, 12], [80, 11], [94, 9], [98, 13], [101, 4]], d: [[0, 28], [18, 28], [24, 18], [30, 22], [42, 18], [54, 12], [70, 14], [84, 12], [101, 6]] },
  RL: { u: [[0, 8], [3, 22], [5, 27], [8, 22], [12, 14], [20, 9], [26, 9], [34, 6], [48, 3], [64, 1], [76, 0]] },
  RM: { u: [[0, 3], [3, 8], [12, 5], [22, 2], [36, 0]] },
  RN: { u: [[0, 3], [2, 12], [4, 14], [8, 10], [20, 6], [32, 4], [44, 2], [54, 4], [62, 1], [78, 0]] },
  RO: { u: [[0, 2], [3, 6], [16, 5], [28, 2], [49, 1]] },
  RP: { u: [[0, 12], [2, 18], [7, 13], [13, 18], [20, 12], [30, 11], [44, 8], [60, 6], [80, 6], [101, 4]] },
  V1: voice(132, 15, 1), V2: voice(274, 24, 0), V3: voice(172, 15, 2)
};

// Dense vocal recording: clipped peaks above, a slow swell below.
function voice(len, low, dense) {
  const u = [], d = [], out = dense === 1 ? 14 : 5;
  for (let i = 0; i <= len; i++) {
    const rise = dense === 1 ? 1 : dense === 2 ? Math.min(1, .3 + i / 12) : Math.min(1, .5 + i / 5);
    const fall = dense === 2 ? 1 : Math.min(1, Math.max(0, len - i) / out);
    let n = 0;
    if (dense && (dense === 1 || i < 76 || i % 4 === 0)) n = i % 4 === 0 ? 7 + (i * 3) % 10 : i % 4 === 2 && i % 3 ? (i * 5) % 5 : 0;
    if (!dense) n = i % 71 === 14 ? 10 : i % 47 === 6 ? 5 : 0;
    u.push([i, (28 - n * fall) * fall * rise]);
    let w = low + Math.sin(i / 9) * (low > 20 ? 1.5 : 1) + Math.sin(i * 1.7) * .8;
    if (!dense && (i < 22 || (i > 76 && i < 96) || (i > 132 && i < 160) || i > 262)) w = 28;
    if (!dense && i > 165 && i < 258) w -= 2;
    if (dense === 2) w += Math.min(6, i / 20);
    d.push([i, Math.min(28, w) * fall * rise]);
  }
  return { u, d };
}

// One side of a waveform outline, as a list of x,y points.
function side(hits, key, cy, scale, max, from, to) {
  const dir = key === 'u' ? -1 : 1, pts = [[from, cy + dir * .5]];
  hits.forEach(([x, type, cap], n) => {
    if (x < from - 12 || x > to) return;
    const env = S[type][key] || S[type].u, stop = n + 1 < hits.length ? hits[n + 1][0] : T1 + 60;
    let prev = null;
    pts.push([x - 1, cy + dir * .5]);
    for (const [dx, a0] of env) {
      if (x + dx > stop - 1) break;
      const add = (px, a) => pts.push([px, cy + dir * Math.max(.5, Math.min(a * scale, max, key === 'u' && cap || 99))]);
      if (prev && dx - prev[0] > 5) {
        for (let s = prev[0] + 2.5; s < dx - 1; s += 2.5) {
          const a = prev[1] + (a0 - prev[1]) * (s - prev[0]) / (dx - prev[0]);
          add(x + s, a >= 27.9 ? a : a * (1 + .09 * Math.sin(s * 2.3 + x)));
        }
      }
      add(x + dx, a0);
      prev = [dx, a0];
    }
    if (prev && prev[1] < 1.5) pts.push([x + prev[0] + 1, cy + dir * .5]);
  });
  pts.push([to, cy + dir * .5]);
  return pts;
}
const wave = (hits, cy, scale, max, from = T0 - 20, to = T1 + 60) => 'M' + [...side(hits, 'u', cy, scale, max, from, to), ...side(hits, 'd', cy, scale, max, from, to).reverse()].map(p => p[0].toFixed(1) + ' ' + p[1].toFixed(1)).join('L') + 'Z';

const beats = 'C A C A E D B A A C A E D B A A'.split(' ');
const at = [400, 431.5, 482, 532, 582, 682.5, 733.5, 784, 834, 884, 935, 985, 1086, 1136.5, 1187, 1237];
const full = at.map((x, i) => [x, beats[i]]);
const sliced = full.map(h => [h[0] + 1, h[1]]);
const before = sliced.slice(0, 4), after = sliced.slice(5);
const kick = at.map((x, i) => [x, 'K' + beats[i]]);
const snare = [[432, 't'], [482, 't'], [532, 't'], [582, 'T'], [683, 't'], [784, 't'], [885, 't'], [935, 't'], [985, 'T'], [1086, 't'], [1187, 't'], [1240, 't']];
const bottom = [[404, 'F'], [455, 'G'], [557, 's'], [657, 'H'], [707, 'I'], [808, 'F', 16], [858, 'G', 16], [959, 'J'], [1060, 'H'], [1110, 'I'], [1211, 'F'], [1261, 'G']];
const hihat = [[405, 'K'], [455, 'L'], [556, 'M'], [656, 'N'], [757, 'O'], [808, 'K'], [858, 'L'], [958.5, 'P'], [1060, 'N'], [1160, 'O'], [1211, 'K'], [1261, 'L']];
const rack = [[404, 'n'], [454, 'RL'], [555, 'RM'], [656, 'RN'], [757, 'RO'], [808, 'n'], [857, 'RL', 15], [958, 'RP'], [1059, 'RN'], [1160, 'RO'], [1211, 'n'], [1261, 'RL']];
const vocal = [[400, 'V1'], [595, 'q'], [788, 'V2'], [1109, 'V3']];

const teal = ['#5b8381', '#1e4b4a'];
const tracks = [
  { kind: 'folder', name: 'REALDRUMS' },
  { kind: 'tall selected', num: 1, name: 'Track 01', armed: true, ring: 'stereo', h: 177, ch: [[before, 45, 1, 40, T0 - 20, 582], [after, 45, 1, 40, 683, T1 + 60], [before, 132.500, 1, 40, T0 - 20, 582], [after, 132.500, 1, 40, 683, T1 + 60]], fill: ['#7cc8c0', '#3f9f97'] },
  { kind: 'purple', num: 2, name: 'Vocal', ring: 'mono', h: 58, ch: [[vocal, 29, 1, 28]], fill: ['#735a6f', '#35203a'], level: 26 },
  { kind: 'green', num: 3, name: 'clean beats', off: true, ring: 'stereo', color: true, h: 58, ch: [[full, 15, 1.150, 14], [full, 43.500, 1.150, 14]], fill: ['#739b66', '#33661f'], level: 12 },
  { num: 4, name: 'Kick Drum', ring: 'mono', h: 58, ch: [[kick, 29, 1, 28]], fill: teal, level: 9 },
  { num: 5, name: 'Snare Top-01', ring: 'mono', h: 58, ch: [[snare, 29, 1, 28]], fill: teal, level: 14 },
  { num: 6, name: 'snare bottom 1', hover: true, off: true, timer: true, ring: 'mono', h: 58, ch: [[bottom, 29, 1, 28]], fill: teal, clip: 'snare bottom 1 (snare bottom 1-02)', level: 11 },
  { num: 7, name: 'hihat 1', off: true, timer: true, ring: 'mono', h: 58, ch: [[hihat, 29, 1, 28]], fill: teal, clip: 'hihat 1 (hihat 1)', level: 5 },
  { num: 8, name: 'rack tom 1', off: true, timer: true, ring: 'mono', h: 58, ch: [[rack, 29, 1, 28]], fill: teal, clip: 'rack tom 1 (rack tom 1)' }
];

const sq = (id, label, cls = '') => `<button class="sq ${cls}" aria-label="${label}">${use(id)}</button>`;

function head(t) {
  const folder = t.kind === 'folder', o = t.off ? ' off' : '';
  const strip = folder ? use('folder') : use('tri') + `<span>${t.num}</span>`;
  const first = `<button class="sq">M</button><button class="sq">S</button>
    <span class="name${t.hover ? ' hover' : ''}">${t.name}${t.hover ? use('down') : ''}</span>
    <button class="round${t.armed ? ' armed' : o}" aria-label="Record enable">${use('dot')}</button>
    <button class="round${o}" aria-label="Monitor">${use('speaker')}</button>
    <span class="automation">${folder ? sq('lock', 'Lock', 'faint') : '<button class="sq">R</button><button class="sq">W</button>'}</span>`;
  const second = folder ? '<div class="line"><button class="sq" aria-label="Group editing">=</button></div>' :
    `<div class="line second"><button class="round" aria-label="Edit channel">e</button>${sq('ins', 'Inserts')}${sq('eq', 'Equalizers', t.color ? 'on-yellow' : '')}${sq('send', 'Sends', t.color ? 'on-blue' : '')}${t.timer ? sq('timer', 'Time base', 'grp') : sq('note', 'Musical mode', 'on-orange')}${sq('lock', 'Lock')}${sq('lanes', 'Lanes')}${use(t.ring, 'ring')}</div>`;
  return `<div class="head"><div class="strip">${strip}</div><div class="panel"><div class="line">${first}</div>${second}</div></div>`;
}

function lane(t, i) {
  if (t.kind === 'folder') return '<div class="lane"></div>';
  const sliced = t.kind === 'tall selected';
  let grid = '';
  for (let x = 431.500; x < T1; x += 50.400) grid += `M${x.toFixed(1)} 0V${t.h}`;
  const id = 'fill' + i, edge = sliced ? 'none' : '#1d3436';
  const svg = `<svg class="waves" viewBox="${T0} 0 ${SPAN} ${t.h}" preserveAspectRatio="none">
    <linearGradient id="${id}" gradientUnits="userSpaceOnUse" x1="0" y1="0" x2="0" y2="${t.h}"><stop stop-color="${t.fill[0]}"/><stop offset="1" stop-color="${t.fill[1]}"/></linearGradient>
    <path d="${sliced ? 'M632.500 0V177' : grid}" stroke="#123" stroke-opacity=".1" fill="none"/>
    ${t.ch.map(c => `<path d="${wave(...c)}" fill="url(#${id})" stroke="${edge}" stroke-opacity=".7" stroke-width=".7"/>`).join('')}</svg>`;
  if (sliced) {
    const b = [402, 431, 482, 532, 583, 683, 733, 784, 834, 885, 935, 985, 1086, 1136, 1187, 1237, 1288];
    const events = b.slice(0, -1).map((x, n) => {
      const w = `style="width:${pct(Math.min(b[n + 1], T1) - x)}"`;
      if (n === 4) return `<div class="gapspace" ${w}></div>`;
      return `<div class="event${n === 0 ? ' cut' : n === 5 ? ' picked' : ''}" ${w}>${n === 0 ? 's' : 'Beats'}${n === 5 ? '<i></i><i></i>' : ''}</div>`;
    }).join('');
    return `<div class="lane"><div class="events">${events}</div><svg class="pointer" style="left:${pct(683 - T0)}" viewBox="0 0 12 12"><path d="M0 6l4-4v3h4V2l4 4-4 4V7H4v3zM5.300 1h1.400v10H5.300z" fill="#0a0e10" stroke="#dfe6e3" stroke-width=".5"/></svg>${svg}</div>`;
  }
  const over = t.clip ? `<div class="events"><div class="clip" style="width:${pct(382)}"></div><div class="clip" style="width:${pct(496)}">${t.clip}</div></div>` : '';
  return `<div class="lane">${svg}${over}</div>`;
}

document.getElementById('tracks').innerHTML = tracks.map((t, i) =>
  `<div class="track ${t.kind || ''}">${head(t)}<div class="meter">${t.level ? `<div class="level" style="padding-top:${t.level}px"><i></i><i></i></div>` : ''}</div>${lane(t, i)}</div>`).join('');

const marks = { 582: '3.4', 784: '4', 985: '4.2', 1187: '4.3' };
const ticks = [402, 431, 481, 532, 582, 633, 683, 733, 784, 834, 884, 935, 985, 1036, 1086, 1137, 1187, 1237, 1280];
document.getElementById('ruler').innerHTML = ticks.slice(0, -1).map((x, n) => {
  const m = marks[x] || '';
  return `<span class="tick${m === '4' ? ' bar' : m ? ' beat' : ''}" style="width:${pct(ticks[n + 1] - x)}">${m}</span>`;
}).join('');
```
